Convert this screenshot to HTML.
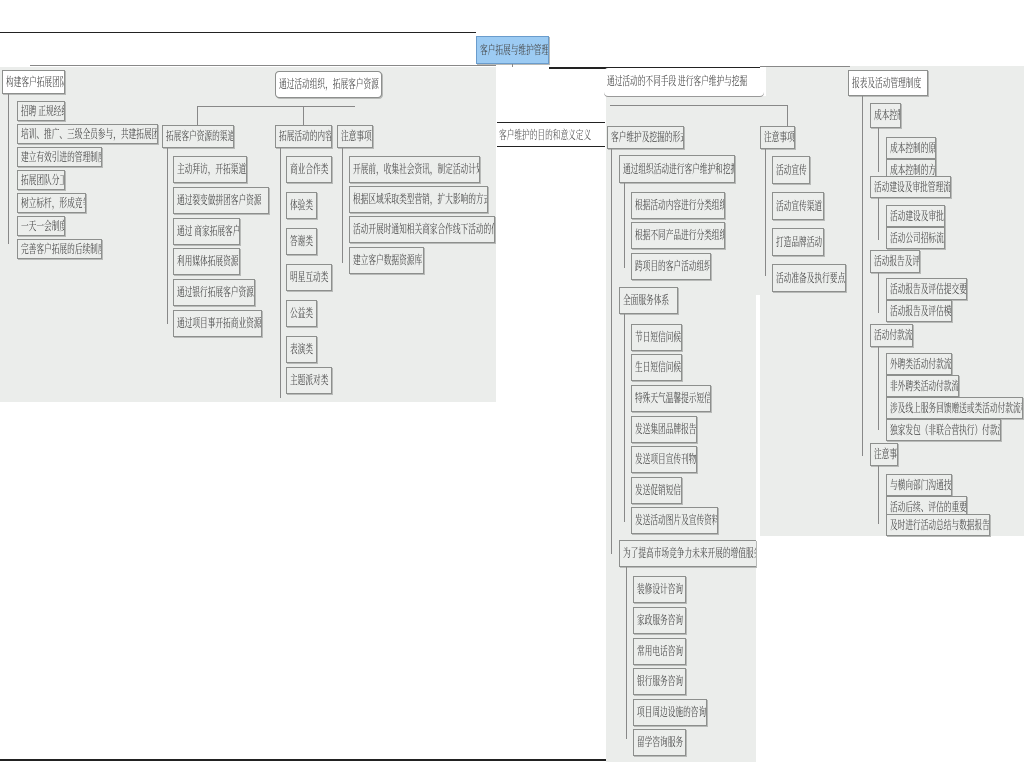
<!DOCTYPE html>
<html><head><meta charset="utf-8"><style>
body{margin:0;width:1024px;height:768px;position:relative;background:#fff;overflow:hidden;font-family:"Liberation Serif","Noto Serif CJK SC",serif}
.p{position:absolute;background:#ebedeb}
.b{position:absolute;box-sizing:border-box;background:#eceeec;border:1px solid #8d8f8d;box-shadow:1px 1px 0 #b8bab8;font-size:12px;color:#444;white-space:nowrap;overflow:hidden;padding-left:3px}
.b span,.t span{display:inline-block;transform:scaleX(0.64);transform-origin:0 50%}
.w{background:#fff;border-radius:4px}
.l{position:absolute;background:#888}
.k{position:absolute;background:#222}
.t{position:absolute;font-size:12px;color:#555;white-space:nowrap}
</style></head><body>
<div class="p" style="left:0;top:67px;width:496px;height:335px"></div>
<div class="p" style="left:606px;top:95px;width:150px;height:667px"></div>
<div class="p" style="left:756px;top:95px;width:100px;height:200px"></div>
<div class="p" style="left:760px;top:66px;width:264px;height:470px"></div>
<div class="p" style="left:606px;top:66px;width:160px;height:30px;background:#fff"></div>
<div class="k" style="left:0;top:32px;width:476px;height:1px"></div>
<div class="k" style="left:549px;top:67px;width:211px;height:2px"></div>
<div class="k" style="left:0;top:759px;width:606px;height:2px"></div>
<div class="k" style="left:497px;top:122px;width:108px;height:1px"></div>
<div class="k" style="left:497px;top:146px;width:108px;height:1px"></div>
<div class="t" style="left:499px;top:126px"><span>客户维护的目的和意义定义</span></div>
<div class="b" style="left:476px;top:36px;width:73px;height:28px;line-height:26px;background:#9ccbf3;border-color:#6a9ccc"><span>客户拓展与维护管理</span></div>
<div class="l" style="left:30px;top:65px;width:466px;height:1px"></div>
<div class="l" style="left:512px;top:64px;width:1px;height:3px"></div>
<div class="b w" style="left:2px;top:70px;width:63px;height:24px;line-height:22px;border-radius:0"><span>构建客户拓展团队</span></div>
<div class="l" style="left:8px;top:94px;width:1px;height:150px"></div>
<div class="b" style="left:17px;top:101px;width:48px;height:20px;line-height:18px"><span>招聘 正规经纪</span></div>
<div class="b" style="left:17px;top:124px;width:141px;height:20px;line-height:18px"><span>培训、推广、三级全员参与，共建拓展团队</span></div>
<div class="b" style="left:17px;top:147px;width:85px;height:20px;line-height:18px"><span>建立有效引进的管理制度</span></div>
<div class="b" style="left:17px;top:170px;width:48px;height:20px;line-height:18px"><span>拓展团队分工</span></div>
<div class="b" style="left:17px;top:193px;width:69px;height:20px;line-height:18px"><span>树立标杆，形成竞争</span></div>
<div class="b" style="left:17px;top:216px;width:48px;height:20px;line-height:18px"><span>一天一会制度</span></div>
<div class="b" style="left:17px;top:239px;width:85px;height:20px;line-height:18px"><span>完善客户拓展的后续制度</span></div>
<div class="b w" style="left:275px;top:71px;width:107px;height:27px;line-height:25px;background:#fff"><span>通过活动组织，拓展客户资源</span></div>
<div class="l" style="left:197px;top:106px;width:158px;height:1px"></div>
<div class="l" style="left:197px;top:106px;width:1px;height:19px"></div>
<div class="l" style="left:303px;top:106px;width:1px;height:19px"></div>
<div class="b" style="left:162px;top:125px;width:72px;height:23px;line-height:21px"><span>拓展客户资源的渠道</span></div>
<div class="b" style="left:275px;top:125px;width:57px;height:23px;line-height:21px"><span>拓展活动的内容</span></div>
<div class="b" style="left:337px;top:125px;width:36px;height:23px;line-height:21px"><span>注意事项</span></div>
<div class="l" style="left:167px;top:148px;width:1px;height:176px"></div>
<div class="b" style="left:173px;top:156px;width:74px;height:27px;line-height:25px"><span>主动拜访，开拓渠道</span></div>
<div class="b" style="left:173px;top:187px;width:96px;height:27px;line-height:25px"><span>通过裂变做拼团客户资源</span></div>
<div class="b" style="left:173px;top:218px;width:67px;height:27px;line-height:25px"><span>通过 商家拓展客户</span></div>
<div class="b" style="left:173px;top:248px;width:67px;height:27px;line-height:25px"><span>利用媒体拓展资源</span></div>
<div class="b" style="left:173px;top:279px;width:82px;height:27px;line-height:25px"><span>通过银行拓展客户资源</span></div>
<div class="b" style="left:173px;top:310px;width:89px;height:27px;line-height:25px"><span>通过项目事开拓商业资源</span></div>
<div class="l" style="left:280px;top:148px;width:1px;height:250px"></div>
<div class="b" style="left:286px;top:156px;width:46px;height:27px;line-height:25px"><span>商业合作类</span></div>
<div class="b" style="left:286px;top:192px;width:31px;height:27px;line-height:25px"><span>体验类</span></div>
<div class="b" style="left:286px;top:228px;width:31px;height:27px;line-height:25px"><span>答谢类</span></div>
<div class="b" style="left:286px;top:264px;width:46px;height:27px;line-height:25px"><span>明星互动类</span></div>
<div class="b" style="left:286px;top:300px;width:31px;height:27px;line-height:25px"><span>公益类</span></div>
<div class="b" style="left:286px;top:336px;width:31px;height:27px;line-height:25px"><span>表演类</span></div>
<div class="b" style="left:286px;top:367px;width:46px;height:27px;line-height:25px"><span>主题派对类</span></div>
<div class="l" style="left:342px;top:148px;width:1px;height:115px"></div>
<div class="b" style="left:349px;top:156px;width:131px;height:27px;line-height:25px"><span>开展前，收集社会资讯，制定活动计划</span></div>
<div class="b" style="left:349px;top:186px;width:139px;height:27px;line-height:25px"><span>根据区域采取类型营销，扩大影响的方式</span></div>
<div class="b" style="left:349px;top:216px;width:146px;height:27px;line-height:25px"><span>活动开展时通知相关商家合作线下活动的信息</span></div>
<div class="b" style="left:349px;top:247px;width:75px;height:27px;line-height:25px"><span>建立客户数据资源库</span></div>
<div class="b w" style="left:604px;top:68px;width:160px;height:28px;line-height:26px;background:#fff;border:none;box-shadow:0 1px 0 #999"><span>通过活动的不同手段 进行客户维护与挖掘</span></div>
<div class="l" style="left:610px;top:105px;width:178px;height:1px"></div>
<div class="l" style="left:787px;top:105px;width:1px;height:21px"></div>
<div class="b" style="left:607px;top:126px;width:77px;height:23px;line-height:21px"><span>客户维护及挖掘的形式</span></div>
<div class="b" style="left:760px;top:126px;width:35px;height:23px;line-height:21px"><span>注意事项</span></div>
<div class="l" style="left:611px;top:149px;width:1px;height:405px"></div>
<div class="b" style="left:619px;top:155px;width:116px;height:28px;line-height:26px"><span>通过组织活动进行客户维护和挖掘</span></div>
<div class="l" style="left:624px;top:183px;width:1px;height:85px"></div>
<div class="b" style="left:631px;top:192px;width:94px;height:27px;line-height:25px"><span>根据活动内容进行分类组织</span></div>
<div class="b" style="left:631px;top:222px;width:94px;height:27px;line-height:25px"><span>根据不同产品进行分类组织</span></div>
<div class="b" style="left:631px;top:253px;width:80px;height:27px;line-height:25px"><span>跨项目的客户活动组织</span></div>
<div class="b" style="left:619px;top:287px;width:59px;height:27px;line-height:25px"><span>全面服务体系</span></div>
<div class="l" style="left:624px;top:314px;width:1px;height:208px"></div>
<div class="b" style="left:631px;top:324px;width:51px;height:27px;line-height:25px"><span>节日短信问候</span></div>
<div class="b" style="left:631px;top:354px;width:51px;height:27px;line-height:25px"><span>生日短信问候</span></div>
<div class="b" style="left:631px;top:385px;width:80px;height:27px;line-height:25px"><span>特殊天气温馨提示短信</span></div>
<div class="b" style="left:631px;top:416px;width:66px;height:27px;line-height:25px"><span>发送集团品牌报告</span></div>
<div class="b" style="left:631px;top:446px;width:66px;height:27px;line-height:25px"><span>发送项目宣传刊物</span></div>
<div class="b" style="left:631px;top:477px;width:51px;height:27px;line-height:25px"><span>发送促销短信</span></div>
<div class="b" style="left:631px;top:507px;width:87px;height:27px;line-height:25px"><span>发送活动图片及宣传资料</span></div>
<div class="b" style="left:619px;top:540px;width:137px;height:27px;line-height:25px;border-right:none"><span>为了提高市场竞争力未来开展的增值服务</span></div>
<div class="l" style="left:626px;top:567px;width:1px;height:172px"></div>
<div class="b" style="left:633px;top:576px;width:53px;height:27px;line-height:25px"><span>装修设计咨询</span></div>
<div class="b" style="left:633px;top:607px;width:53px;height:27px;line-height:25px"><span>家政服务咨询</span></div>
<div class="b" style="left:633px;top:638px;width:53px;height:27px;line-height:25px"><span>常用电话咨询</span></div>
<div class="b" style="left:633px;top:668px;width:53px;height:27px;line-height:25px"><span>银行服务咨询</span></div>
<div class="b" style="left:633px;top:699px;width:74px;height:27px;line-height:25px"><span>项目周边设施的咨询</span></div>
<div class="b" style="left:633px;top:729px;width:53px;height:27px;line-height:25px"><span>留学咨询服务</span></div>
<div class="l" style="left:765px;top:149px;width:1px;height:127px"></div>
<div class="b" style="left:772px;top:156px;width:38px;height:28px;line-height:26px"><span>活动宣传</span></div>
<div class="b" style="left:772px;top:192px;width:52px;height:28px;line-height:26px"><span>活动宣传渠道</span></div>
<div class="b" style="left:772px;top:228px;width:52px;height:28px;line-height:26px"><span>打造品牌活动</span></div>
<div class="b" style="left:772px;top:264px;width:74px;height:28px;line-height:26px"><span>活动准备及执行要点</span></div>
<div class="l" style="left:760px;top:66px;width:90px;height:1px"></div>
<div class="b w" style="left:848px;top:70px;width:80px;height:26px;line-height:24px;background:#fff;border-radius:0"><span>报表及活动管理制度</span></div>
<div class="l" style="left:862px;top:96px;width:1px;height:360px"></div>
<div class="b" style="left:870px;top:103px;width:31px;height:25px;line-height:23px"><span>成本控制</span></div>
<div class="l" style="left:878px;top:128px;width:1px;height:44px"></div>
<div class="b" style="left:886px;top:137px;width:50px;height:22px;line-height:20px"><span>成本控制的原则</span></div>
<div class="b" style="left:886px;top:159px;width:50px;height:22px;line-height:20px"><span>成本控制的方式</span></div>
<div class="b" style="left:870px;top:176px;width:81px;height:22px;line-height:20px"><span>活动建设及审批管理流程</span></div>
<div class="l" style="left:878px;top:198px;width:1px;height:42px"></div>
<div class="b" style="left:886px;top:205px;width:59px;height:22px;line-height:20px"><span>活动建设及审批流程</span></div>
<div class="b" style="left:886px;top:227px;width:59px;height:22px;line-height:20px"><span>活动公司招标流程</span></div>
<div class="b" style="left:870px;top:250px;width:50px;height:23px;line-height:21px"><span>活动报告及评估</span></div>
<div class="l" style="left:878px;top:273px;width:1px;height:40px"></div>
<div class="b" style="left:886px;top:278px;width:81px;height:22px;line-height:20px"><span>活动报告及评估提交要求</span></div>
<div class="b" style="left:886px;top:300px;width:66px;height:22px;line-height:20px"><span>活动报告及评估模版</span></div>
<div class="b" style="left:870px;top:324px;width:43px;height:23px;line-height:21px"><span>活动付款流程</span></div>
<div class="l" style="left:878px;top:347px;width:1px;height:83px"></div>
<div class="b" style="left:886px;top:353px;width:66px;height:22px;line-height:20px"><span>外聘类活动付款流程</span></div>
<div class="b" style="left:886px;top:375px;width:73px;height:22px;line-height:20px"><span>非外聘类活动付款流程</span></div>
<div class="b" style="left:886px;top:397px;width:137px;height:22px;line-height:20px"><span>涉及线上服务回馈赠送或类活动付款流程</span></div>
<div class="b" style="left:886px;top:419px;width:115px;height:22px;line-height:20px"><span>独家发包（非联合营执行）付款流程</span></div>
<div class="b" style="left:870px;top:443px;width:28px;height:23px;line-height:21px"><span>注意事项</span></div>
<div class="l" style="left:878px;top:466px;width:1px;height:58px"></div>
<div class="b" style="left:886px;top:474px;width:66px;height:22px;line-height:20px"><span>与横向部门沟通技巧</span></div>
<div class="b" style="left:886px;top:496px;width:81px;height:22px;line-height:20px"><span>活动后续、评估的重要性</span></div>
<div class="b" style="left:886px;top:514px;width:104px;height:22px;line-height:20px"><span>及时进行活动总结与数据报告</span></div>
</body></html>
